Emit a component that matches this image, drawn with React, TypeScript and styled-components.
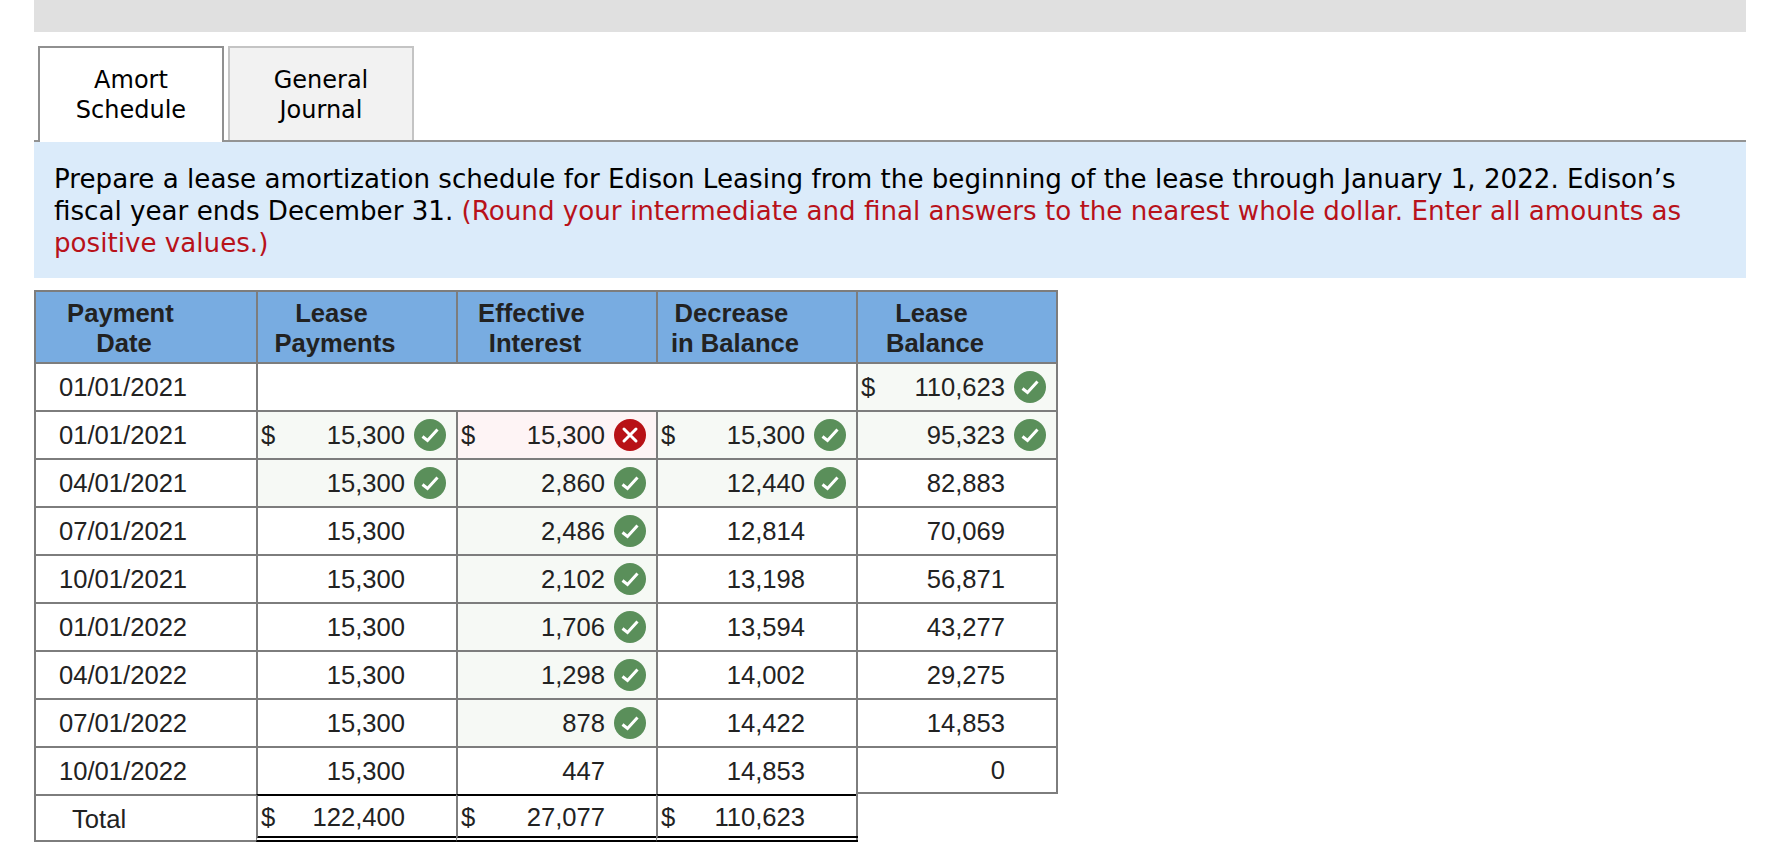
import React from "react";
import styled, { createGlobalStyle } from "styled-components";

const Global = createGlobalStyle`
  html, body { margin: 0; padding: 0; background: #fff; }
  body { font-family: "Liberation Sans", Arial, sans-serif; color: #222; }
`;

const Page = styled.div`
  margin-left: 34px;
  width: 1712px;
  height: 850px;
  overflow: hidden;
`;
const TopBar = styled.div`
  height: 32px;
  background: #e0e0e0;
`;
const TabBar = styled.div`
  display: flex;
  align-items: flex-start;
  gap: 4px;
  margin-top: 14px;
  height: 94px;
  padding-left: 4px;
  border-bottom: 2px solid #939393;
`;
const Tab = styled.div<{ $active?: boolean }>`
  box-sizing: border-box;
  width: 186px;
  height: ${(p) => (p.$active ? "96px" : "94px")};
  padding-top: 17px;
  border: 2px solid ${(p) => (p.$active ? "#909090" : "#c4c4c4")};
  border-bottom: none;
  background: ${(p) => (p.$active ? "#fff" : "#f2f2f2")};
  font-family: "DejaVu Sans", Verdana, sans-serif;
  font-size: 24px;
  line-height: 30px;
  text-align: center;
  color: #000;
`;
const Prompt = styled.div`
  background: #dbebfa;
  padding: 21px 60px 19px 20px;
  font-family: "DejaVu Sans", Verdana, sans-serif;
  font-size: 26.15px;
  line-height: 32px;
  color: #000;
`;
const Hint = styled.span`
  color: #b8121a;
`;
const Schedule = styled.table`
  margin-top: 12px;
  width: 1024px;
  table-layout: fixed;
  border-collapse: separate;
  border-spacing: 0;
  font-size: 25.6px;
  line-height: 30px;
  color: #222;
`;
const HeadCell = styled.th`
  box-sizing: border-box;
  height: 72px;
  padding: 2px 44px 0 0;
  background: #78ace1;
  border-top: 2px solid #7d7d7d;
  border-left: 2px solid #7d7d7d;
  font-weight: 700;
  text-align: center;
  &:last-child { border-right: 2px solid #7d7d7d; }
`;
const DateCell = styled.td<{ $total?: boolean }>`
  box-sizing: border-box;
  height: 48px;
  padding: ${(p) => (p.$total ? "2px 0 0 36px" : "0 0 0 23px")};
  border-top: 2px solid #7d7d7d;
  border-left: 2px solid #7d7d7d;
  ${(p) => (p.$total ? "border-bottom: 2px solid #7d7d7d;" : "")}
`;
const ValueCell = styled.td<{ $state?: "ok" | "bad"; $last?: boolean; $closing?: boolean }>`
  box-sizing: border-box;
  height: 48px;
  padding: 0 10px 0 3px;
  border-top: 2px solid #7d7d7d;
  border-left: 2px solid #7d7d7d;
  background: ${(p) => (p.$state === "ok" ? "#f6f9f5" : p.$state === "bad" ? "#fef4f5" : "#fff")};
  ${(p) => (p.$last ? "border-right: 2px solid #7d7d7d;" : "")}
  ${(p) => (p.$closing ? "border-bottom: 2px solid #7d7d7d;" : "")}
`;
const TotalCell = styled.td`
  box-sizing: border-box;
  height: 48px;
  padding: 2px 10px 0 3px;
  border-top: 2px solid #000;
  border-left: 2px solid #7d7d7d;
  border-bottom: 6px double #000;
`;
const TotalEnd = styled.td`
  box-sizing: border-box;
  height: 48px;
  padding: 0;
  vertical-align: top;
`;
const TotalEndRule = styled.div`
  box-sizing: border-box;
  width: 2px;
  height: 48px;
  border-bottom: 6px double #000;
  background: #7d7d7d;
`;
const EmptyCell = styled.td`
  box-sizing: border-box;
  height: 48px;
  border-top: 2px solid #7d7d7d;
  border-left: 2px solid #7d7d7d;
`;
const Amount = styled.div`
  display: flex;
  align-items: center;
`;
const Dollar = styled.span`
  flex: none;
`;
const Figure = styled.span`
  margin-left: auto;
`;
const Slot = styled.span`
  flex: none;
  width: 32px;
  height: 32px;
  margin-left: 9px;
`;

const Badge = ({ state }: { state: "ok" | "bad" }) => (
  <svg width="32" height="32" viewBox="0 0 32 32" aria-hidden="true">
    <circle cx="16" cy="16" r="16" fill={state === "ok" ? "#5a8f5a" : "#b81116"} />
    {state === "ok" ? (
      <path d="M8.5 17.5 L13.5 21.5 L23.5 10.5" fill="none" stroke="#fff" strokeWidth="3" />
    ) : (
      <path d="M10 10 L22 22 M22 10 L10 22" fill="none" stroke="#fff" strokeWidth="3" strokeLinecap="round" />
    )}
  </svg>
);

type V = { n: string; d?: boolean; s?: "ok" | "bad" };

const Value = ({ v }: { v: V }) => (
  <Amount>
    {v.d && <Dollar>$</Dollar>}
    <Figure>{v.n}</Figure>
    <Slot>{v.s && <Badge state={v.s} />}</Slot>
  </Amount>
);

const rows: { date: string; cells: V[] }[] = [
  { date: "01/01/2021", cells: [{ n: "15,300", d: true, s: "ok" }, { n: "15,300", d: true, s: "bad" }, { n: "15,300", d: true, s: "ok" }, { n: "95,323", s: "ok" }] },
  { date: "04/01/2021", cells: [{ n: "15,300", s: "ok" }, { n: "2,860", s: "ok" }, { n: "12,440", s: "ok" }, { n: "82,883" }] },
  { date: "07/01/2021", cells: [{ n: "15,300" }, { n: "2,486", s: "ok" }, { n: "12,814" }, { n: "70,069" }] },
  { date: "10/01/2021", cells: [{ n: "15,300" }, { n: "2,102", s: "ok" }, { n: "13,198" }, { n: "56,871" }] },
  { date: "01/01/2022", cells: [{ n: "15,300" }, { n: "1,706", s: "ok" }, { n: "13,594" }, { n: "43,277" }] },
  { date: "04/01/2022", cells: [{ n: "15,300" }, { n: "1,298", s: "ok" }, { n: "14,002" }, { n: "29,275" }] },
  { date: "07/01/2022", cells: [{ n: "15,300" }, { n: "878", s: "ok" }, { n: "14,422" }, { n: "14,853" }] },
  { date: "10/01/2022", cells: [{ n: "15,300" }, { n: "447" }, { n: "14,853" }, { n: "0" }] },
];

const heads: [string, string][] = [
  ["Payment", "Date"],
  ["Lease", "Payments"],
  ["Effective", "Interest"],
  ["Decrease", "in Balance"],
  ["Lease", "Balance"],
];

export default function App() {
  return (
    <>
      <Global />
      <Page>
        <TopBar />
        <TabBar>
          <Tab $active>Amort<br />Schedule</Tab>
          <Tab>General<br />Journal</Tab>
        </TabBar>
        <Prompt>
          Prepare a lease amortization schedule for Edison Leasing from the beginning of the lease through January 1, 2022. Edison’s fiscal year ends December 31.{" "}
          <Hint>(Round your intermediate and final answers to the nearest whole dollar. Enter all amounts as positive values.)</Hint>
        </Prompt>
        <Schedule>
          <colgroup>
            <col width="222" />
            <col width="200" />
            <col width="200" />
            <col width="200" />
            <col width="202" />
          </colgroup>
          <thead>
            <tr>
              {heads.map(([a, b], i) => (
                <HeadCell key={i}>{a}{"\u00a0"}<br />{b}</HeadCell>
              ))}
            </tr>
          </thead>
          <tbody>
            <tr>
              <DateCell>01/01/2021</DateCell>
              <EmptyCell colSpan={3} />
              <ValueCell $state="ok" $last><Value v={{ n: "110,623", d: true, s: "ok" }} /></ValueCell>
            </tr>
            {rows.map((r, i) => (
              <tr key={i}>
                <DateCell>{r.date}</DateCell>
                {r.cells.map((c, j) => (
                  <ValueCell key={j} $state={c.s} $last={j === 3} $closing={j === 3 && i === rows.length - 1}>
                    <Value v={c} />
                  </ValueCell>
                ))}
              </tr>
            ))}
            <tr>
              <DateCell $total>Total</DateCell>
              <TotalCell><Value v={{ n: "122,400", d: true }} /></TotalCell>
              <TotalCell><Value v={{ n: "27,077", d: true }} /></TotalCell>
              <TotalCell><Value v={{ n: "110,623", d: true }} /></TotalCell>
              <TotalEnd><TotalEndRule /></TotalEnd>
            </tr>
          </tbody>
        </Schedule>
      </Page>
    </>
  );
}
